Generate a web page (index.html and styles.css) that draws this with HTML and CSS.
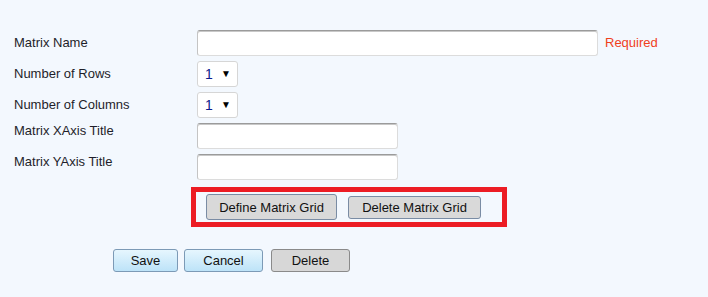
FILE: index.html
```html
<!DOCTYPE html>
<html lang="en">
<head>
  <meta charset="UTF-8">
  <title>Matrix</title>
  <link rel="stylesheet" href="styles.css">
</head>
<body>
  <!-- Matrix definition form -->
  <form class="matrix-form">
    <div class="fields">
      <label class="lbl" for="name">Matrix Name</label>
      <div class="ctl">
        <input type="text" id="name" class="txt txt-wide">
        <span class="required">Required</span>
      </div>

      <label class="lbl" for="rows">Number of Rows</label>
      <div class="ctl">
        <span class="sel-wrap"><select id="rows" class="sel"><option>1</option><option>2</option></select></span>
      </div>

      <label class="lbl" for="cols">Number of Columns</label>
      <div class="ctl">
        <span class="sel-wrap"><select id="cols" class="sel"><option>1</option><option>2</option></select></span>
      </div>

      <label class="lbl lbl-top" for="xaxis">Matrix XAxis Title</label>
      <div class="ctl">
        <input type="text" id="xaxis" class="txt">
      </div>

      <label class="lbl lbl-top" for="yaxis">Matrix YAxis Title</label>
      <div class="ctl">
        <input type="text" id="yaxis" class="txt">
      </div>
    </div>

    <div class="grid-box">
      <button type="button" class="btn-grid btn-define">Define Matrix Grid</button>
      <button type="button" class="btn-grid">Delete Matrix Grid</button>
    </div>

    <div class="actions">
      <button type="button" class="btn btn-blue btn-save">Save</button>
      <button type="button" class="btn btn-blue btn-cancel">Cancel</button>
      <button type="button" class="btn btn-gray">Delete</button>
    </div>
  </form>
</body>
</html>
```

FILE: styles.css
```css
/* Basic page */
body {
  margin: 0;
  background-color: #f3f8fe;
  font-family: "Liberation Sans", Arial, sans-serif;
  font-size: 13px;
  color: #1e1e2a;
}

.matrix-form {
  padding: 30px 0 0 14px;
}

.fields {
  display: grid;
  grid-template-columns: 183px auto;
  row-gap: 6px;
}

.lbl {
  align-self: center;
  line-height: 15px;
}

.lbl-top {
  align-self: start;
}

.ctl {
  display: flex;
  align-items: center;
  height: 25px;
}

.txt {
  box-sizing: border-box;
  width: 201px;
  height: 26px;
  margin: 0;
  padding: 2px 4px;
  background: #fff;
  border: 1px solid #dcdcdc;
  border-top-color: #9b9b9b;
  border-left-color: #c4c4c4;
  border-radius: 3px;
  box-shadow: inset 0 1px 0 #c8c8c8;
  font: inherit;
}

.txt-wide {
  width: 401px;
}

.required {
  margin-left: 7px;
  color: #f0401c;
  font-size: 13px;
}

/* select with a small black triangle */
.sel-wrap {
  position: relative;
  display: inline-block;
}

.sel {
  box-sizing: border-box;
  width: 41px;
  height: 26px;
  margin: 0;
  padding: 0 0 0 7px;
  appearance: none;
  -webkit-appearance: none;
  background: #fff;
  border: 1px solid #d6d6d6;
  border-radius: 3px;
  color: #0c1a8c;
  font: inherit;
  font-size: 14px;
}

.sel-wrap::after {
  content: "\25BC";
  position: absolute;
  right: 7px;
  top: 7px;
  font-size: 10px;
  color: #000;
  pointer-events: none;
}

/* red highlighted box */
.grid-box {
  box-sizing: border-box;
  display: flex;
  align-items: center;
  gap: 11px;
  width: 316px;
  height: 40px;
  margin: 8px 0 0 177px;
  padding: 0 0 0 10px;
  border: 5px solid #ec1c24;
}

.btn-grid {
  box-sizing: border-box;
  height: 23px;
  width: 133px;
  padding: 0;
  background: #d9d9d9;
  border: 1px solid #7a8ca4;
  border-radius: 3px;
  color: #111;
  font: inherit;
  font-size: 13px;
}

.btn-define {
  width: 131px;
  height: 26px;
}

.actions {
  display: flex;
  gap: 6px;
  margin: 22px 0 0 99px;
}

.btn {
  box-sizing: border-box;
  height: 23px;
  padding: 0;
  border-radius: 3px;
  color: #111;
  font: inherit;
  font-size: 13px;
}

.btn-blue {
  background: linear-gradient(#e6f6fe, #bde3f8);
  border: 1px solid #7c9ab6;
}

.btn-save {
  width: 65px;
}

.btn-cancel {
  width: 79px;
}

.btn-gray {
  width: 79px;
  margin-left: 2px;
  background: #d7d7d7;
  border: 1px solid #8a8a8a;
}
```
